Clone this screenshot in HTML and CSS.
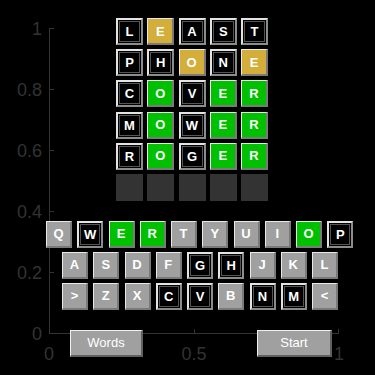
FILE: index.html
```html
<!DOCTYPE HTML>
<html>
    <head>
        <title>Wordle</title>
        <meta charset="utf-8" />
        <link rel="stylesheet" href="styles.css">
    </head>
    <body>
        <div class="figure">
            <svg class="axes" width="375" height="375">
                <g class="spine">
                    <line x1="49.5" y1="28" x2="49.5" y2="334" />
                    <line x1="49" y1="333.5" x2="339" y2="333.5" />
                    <line x1="49" y1="28.5" x2="54" y2="28.5" />
                    <line x1="49" y1="89.5" x2="54" y2="89.5" />
                    <line x1="49" y1="150.5" x2="54" y2="150.5" />
                    <line x1="49" y1="211.5" x2="54" y2="211.5" />
                    <line x1="49" y1="272.5" x2="54" y2="272.5" />
                    <line x1="194.5" y1="329" x2="194.5" y2="334" />
                    <line x1="338.5" y1="329" x2="338.5" y2="334" />
                </g>
                <g class="ylabels">
                    <text x="42" y="35">1</text>
                    <text x="42" y="96">0.8</text>
                    <text x="42" y="157">0.6</text>
                    <text x="42" y="218">0.4</text>
                    <text x="42" y="279">0.2</text>
                    <text x="42" y="340">0</text>
                </g>
                <g class="xlabels">
                    <text x="49" y="360">0</text>
                    <text x="194" y="360">0.5</text>
                    <text x="339" y="360">1</text>
                </g>
            </svg>

            <div class="game">
                <div class="board">
                    <div class="row">
                        <span class="tile black">L</span>
                        <span class="tile yellow">E</span>
                        <span class="tile black">A</span>
                        <span class="tile black">S</span>
                        <span class="tile black">T</span>
                    </div>
                    <div class="row">
                        <span class="tile black">P</span>
                        <span class="tile black">H</span>
                        <span class="tile yellow">O</span>
                        <span class="tile black">N</span>
                        <span class="tile yellow">E</span>
                    </div>
                    <div class="row">
                        <span class="tile black">C</span>
                        <span class="tile green">O</span>
                        <span class="tile black">V</span>
                        <span class="tile green">E</span>
                        <span class="tile green">R</span>
                    </div>
                    <div class="row">
                        <span class="tile black">M</span>
                        <span class="tile green">O</span>
                        <span class="tile black">W</span>
                        <span class="tile green">E</span>
                        <span class="tile green">R</span>
                    </div>
                    <div class="row">
                        <span class="tile black">R</span>
                        <span class="tile green">O</span>
                        <span class="tile black">G</span>
                        <span class="tile green">E</span>
                        <span class="tile green">R</span>
                    </div>
                    <div class="row">
                        <span class="tile empty"></span>
                        <span class="tile empty"></span>
                        <span class="tile empty"></span>
                        <span class="tile empty"></span>
                        <span class="tile empty"></span>
                    </div>
                </div>

                <div class="keyboard">
                    <div class="keys top">
                        <span class="key grey">Q</span>
                        <span class="key black">W</span>
                        <span class="key green">E</span>
                        <span class="key green">R</span>
                        <span class="key grey">T</span>
                        <span class="key grey">Y</span>
                        <span class="key grey">U</span>
                        <span class="key grey">I</span>
                        <span class="key green">O</span>
                        <span class="key black">P</span>
                    </div>
                    <div class="keys">
                        <span class="key grey">A</span>
                        <span class="key grey">S</span>
                        <span class="key grey">D</span>
                        <span class="key grey">F</span>
                        <span class="key black">G</span>
                        <span class="key black">H</span>
                        <span class="key grey">J</span>
                        <span class="key grey">K</span>
                        <span class="key grey">L</span>
                    </div>
                    <div class="keys">
                        <span class="key grey">&gt;</span>
                        <span class="key grey">Z</span>
                        <span class="key grey">X</span>
                        <span class="key black">C</span>
                        <span class="key black">V</span>
                        <span class="key grey">B</span>
                        <span class="key black">N</span>
                        <span class="key black">M</span>
                        <span class="key grey">&lt;</span>
                    </div>
                </div>

                <div class="controls">
                    <button class="btn words">Words</button>
                    <button class="btn start">Start</button>
                </div>
            </div>
        </div>
    </body>
</html>
```

FILE: styles.css
```css
body {
    margin: 0;
    background-color: #000;
    font-family: 'Liberation Sans', Arial, sans-serif;
}

.figure {
    position: relative;
    width: 375px;
    height: 375px;
    overflow: hidden;
}

.axes {
    position: absolute;
    left: 0;
    top: 0;
}

.spine line {
    stroke: #333;
    stroke-width: 1;
}

.axes text {
    font-family: 'Liberation Sans', Arial, sans-serif;
    font-size: 18px;
    fill: #333;
}

.ylabels text {
    text-anchor: end;
}

.xlabels text {
    text-anchor: middle;
}

.game {
    position: relative;
    padding-top: 18px;
}

.board {
    display: flex;
    flex-direction: column;
    gap: 4.2px;
    margin-left: 116px;
}

.row {
    display: flex;
    gap: 4.25px;
}

.tile, .key {
    box-sizing: border-box;
    width: 27px;
    height: 27px;
    display: flex;
    align-items: center;
    justify-content: center;
    color: #fff;
    font-size: 13px;
    font-weight: bold;
    border-style: solid;
    border-width: 1px 2px 2px 1px;
    border-color: #e8e8e8 #7a7a7a #7a7a7a #e8e8e8;
}

.key {
    width: 26px;
}

.black {
    background-color: #000;
    border-width: 2px;
    border-color: #e4e4e4 #8c8c8c #8c8c8c #e4e4e4;
    box-shadow: inset 0 0 0 1px #000, inset 0 0 0 2px #555;
}

.yellow {
    background-color: #d4ae3a;
}

.green {
    background-color: #00c000;
}

.grey {
    background-color: #a0a0a0;
}

.empty {
    background-color: #333;
    border: none;
}

.keyboard {
    display: flex;
    flex-direction: column;
    gap: 4px;
    margin-top: 20px;
}

.keys {
    display: flex;
    gap: 5.25px;
    padding-left: 62px;
}

.keys.top {
    padding-left: 46px;
}

.controls {
    display: flex;
    margin-top: 20px;
}

.btn {
    box-sizing: border-box;
    height: 27px;
    padding: 0;
    background-color: #a0a0a0;
    color: #fff;
    font-family: 'Liberation Sans', Arial, sans-serif;
    font-size: 13px;
    border-style: solid;
    border-width: 1px 2px 2px 1px;
    border-color: #f0f0f0 #606060 #606060 #f0f0f0;
}

.words {
    width: 73px;
    margin-left: 70px;
}

.start {
    width: 75px;
    margin-left: 114px;
}
```
